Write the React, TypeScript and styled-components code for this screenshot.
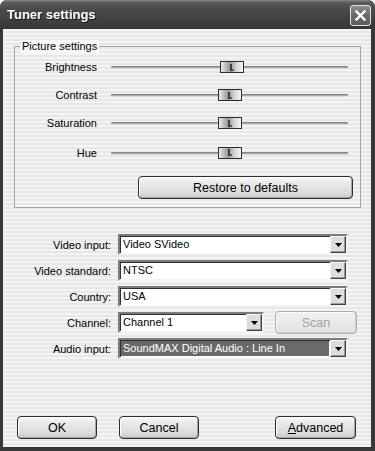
import React from "react";
import styled, { createGlobalStyle } from "styled-components";

const GlobalStyle = createGlobalStyle`
  html, body {
    margin: 0;
    padding: 0;
    background: #ffffff;
  }
  body {
    font-family: "Liberation Sans", Arial, sans-serif;
  }
`;

const Window = styled.div`
  width: 375px;
  height: 451px;
  display: flex;
  flex-direction: column;
  background: #383838;
  border-radius: 7px 7px 0 0;
  overflow: hidden;
`;

const TitleBar = styled.div`
  height: 29px;
  flex: none;
  display: flex;
  align-items: center;
  justify-content: space-between;
  padding: 0 4px 0 7px;
  box-sizing: border-box;
  background: linear-gradient(
    #8c8c8c 0,
    #5e5e5e 2px,
    #4c4c4c 8px,
    #404040 20px,
    #373737 100%
  );
`;

const Title = styled.span`
  color: #ffffff;
  font-weight: bold;
  font-size: 13px;
  text-shadow: 1px 1px 0 #111111;
`;

const CloseButton = styled.div`
  width: 21px;
  height: 21px;
  margin-top: 2px;
  box-sizing: border-box;
  border: 1px solid #e2e2e2;
  border-radius: 3px;
  background: linear-gradient(#8e8e8e, #6a6a6a 50%, #5c5c5c);
  display: flex;
  align-items: center;
  justify-content: center;
`;

const Body = styled.div`
  flex: 1;
  margin: 0 4px 4px 3px;
  display: flex;
  flex-direction: column;
  background: repeating-linear-gradient(
    to bottom,
    #f4f4f4 0,
    #f4f4f4 2px,
    #e7e7e7 2px,
    #e7e7e7 4px
  );
`;

const GroupBox = styled.fieldset`
  margin: 11px 10px 0 11px;
  padding: 0 7px 8px 0;
  border: 1px solid #a6a6a6;
  min-width: 0;
`;

const Legend = styled.legend`
  margin-left: 5px;
  padding: 0 2px;
  font-size: 11px;
  line-height: 13px;
  color: #000000;
  background: #f7f7f7;
`;

const SliderGrid = styled.div`
  display: grid;
  grid-template-columns: 82px 237px;
  grid-template-rows: 28px 28px 28px 31px;
  column-gap: 14px;
  align-items: center;
`;

const Label = styled.span`
  font-size: 11px;
  color: #000000;
  text-align: right;
  white-space: nowrap;
`;

const Track = styled.div`
  position: relative;
  height: 12px;
  &::before {
    content: "";
    position: absolute;
    left: 0;
    right: 0;
    top: 5px;
    height: 3px;
    border-radius: 1px;
    background: linear-gradient(
      to bottom,
      #858585 0,
      #858585 1px,
      #a9a9a9 1px,
      #a9a9a9 2px,
      #dadada 2px
    );
  }
`;

const Thumb = styled.div`
  position: absolute;
  top: 0;
  width: 24px;
  height: 12px;
  box-sizing: border-box;
  border: 1px solid #2c2c2c;
  background: linear-gradient(
    to right,
    #ececec 0%,
    #9c9c9c 38%,
    #a4a4a4 48%,
    #d4d4d4 70%,
    #f6f6f6 100%
  );
  display: flex;
  align-items: center;
  justify-content: center;
`;

const RestoreRow = styled.div`
  display: flex;
  justify-content: flex-end;
  margin-top: 8px;
`;

const Button = styled.button<{ $width: number }>`
  width: ${(p) => p.$width}px;
  height: 23px;
  padding: 0;
  box-sizing: border-box;
  border: 1px solid #2e2e2e;
  border-radius: 4px;
  background: linear-gradient(
    #fbfbfb 0%,
    #ebebeb 25%,
    #dcdcdc 75%,
    #c6c6c6 100%
  );
  box-shadow: inset -1px -1px 0 #a8a8a8, inset 1px 1px 0 #ffffff;
  font-family: "Liberation Sans", Arial, sans-serif;
  font-size: 12.5px;
  color: #000000;
  &:disabled {
    border-color: #acacac;
    color: #a2a2a2;
    background: linear-gradient(#f0f0f0, #e2e2e2);
    box-shadow: inset -1px -1px 0 #cfcfcf, inset 1px 1px 0 #fafafa;
  }
`;

const FormGrid = styled.div`
  margin-top: 26px;
  display: grid;
  grid-template-columns: 108px auto;
  grid-auto-rows: 21px;
  column-gap: 7px;
  row-gap: 5px;
  align-items: center;
`;

const FieldRow = styled.div`
  display: flex;
  align-items: center;
  gap: 11px;
`;

const Combo = styled.div<{ $width: number }>`
  width: ${(p) => p.$width}px;
  height: 21px;
  box-sizing: border-box;
  display: flex;
  background: #ffffff;
  border-style: solid;
  border-width: 2px;
  border-color: #7c7c7c #f4f4f4 #f4f4f4 #7c7c7c;
  box-shadow: inset 1px 1px 0 #303030;
`;

const ComboText = styled.span<{ $selected?: boolean }>`
  flex: 1;
  margin: 1px;
  padding-left: 2px;
  font-size: 11px;
  line-height: 15px;
  white-space: nowrap;
  overflow: hidden;
  color: ${(p) => (p.$selected ? "#ffffff" : "#000000")};
  background: ${(p) => (p.$selected ? "#6a6a6a" : "transparent")};
`;

const ArrowButton = styled.div`
  width: 16px;
  flex: none;
  box-sizing: border-box;
  background: #dedede;
  border-style: solid;
  border-width: 1px;
  border-color: #f8f8f8 #404040 #404040 #f8f8f8;
  box-shadow: inset -1px -1px 0 #9a9a9a;
  display: flex;
  align-items: center;
  justify-content: center;
`;

const Footer = styled.div`
  margin-top: auto;
  display: flex;
  gap: 22px;
  padding: 0 15px 8px 14px;
`;

const Spacer = styled.div`
  flex: 1;
`;

const Underline = styled.span`
  text-decoration: underline;
`;

function Grip() {
  return (
    <svg width="4" height="7" viewBox="0 0 4 7" style={{ marginLeft: -1 }}>
      <rect x="0" y="0" width="2" height="7" fill="#3e3e3e" />
      <rect x="2" y="5" width="2" height="2" fill="#5a5a5a" />
    </svg>
  );
}

function Slider({ value }: { value: number }) {
  return (
    <Track>
      <Thumb style={{ left: Math.round(value * (237 - 24)) }}>
        <Grip />
      </Thumb>
    </Track>
  );
}

function ComboBox({
  width,
  text,
  selected,
}: {
  width: number;
  text: string;
  selected?: boolean;
}) {
  return (
    <Combo $width={width}>
      <ComboText $selected={selected}>{text}</ComboText>
      <ArrowButton>
        <svg width="7" height="4" viewBox="0 0 7 4">
          <path d="M0 0H7L3.5 4Z" fill="#000" />
        </svg>
      </ArrowButton>
    </Combo>
  );
}

const sliders = [
  { name: "Brightness", value: 0.51 },
  { name: "Contrast", value: 0.503 },
  { name: "Saturation", value: 0.503 },
  { name: "Hue", value: 0.503 },
];

export default function App() {
  return (
    <>
      <GlobalStyle />
      <Window>
        <TitleBar>
          <Title>Tuner settings</Title>
          <CloseButton>
            <svg width="11" height="11" viewBox="0 0 11 11">
              <path
                d="M1.5 1.5L9.5 9.5M9.5 1.5L1.5 9.5"
                stroke="#ffffff"
                strokeWidth="2.4"
                strokeLinecap="square"
              />
            </svg>
          </CloseButton>
        </TitleBar>
        <Body>
          <GroupBox>
            <Legend>Picture settings</Legend>
            <SliderGrid>
              {sliders.map((s) => (
                <React.Fragment key={s.name}>
                  <Label>{s.name}</Label>
                  <Slider value={s.value} />
                </React.Fragment>
              ))}
            </SliderGrid>
            <RestoreRow>
              <Button $width={215}>Restore to defaults</Button>
            </RestoreRow>
          </GroupBox>

          <FormGrid>
            <Label>Video input:</Label>
            <ComboBox width={230} text="Video SVideo" />
            <Label>Video standard:</Label>
            <ComboBox width={230} text="NTSC" />
            <Label>Country:</Label>
            <ComboBox width={230} text="USA" />
            <Label>Channel:</Label>
            <FieldRow>
              <ComboBox width={146} text="Channel 1" />
              <Button $width={82} disabled>
                Scan
              </Button>
            </FieldRow>
            <Label>Audio input:</Label>
            <ComboBox
              width={230}
              text="SoundMAX Digital Audio : Line In"
              selected
            />
          </FormGrid>

          <Footer>
            <Button $width={80}>OK</Button>
            <Button $width={80}>Cancel</Button>
            <Spacer />
            <Button $width={81}>
              <Underline>A</Underline>dvanced
            </Button>
          </Footer>
        </Body>
      </Window>
    </>
  );
}
